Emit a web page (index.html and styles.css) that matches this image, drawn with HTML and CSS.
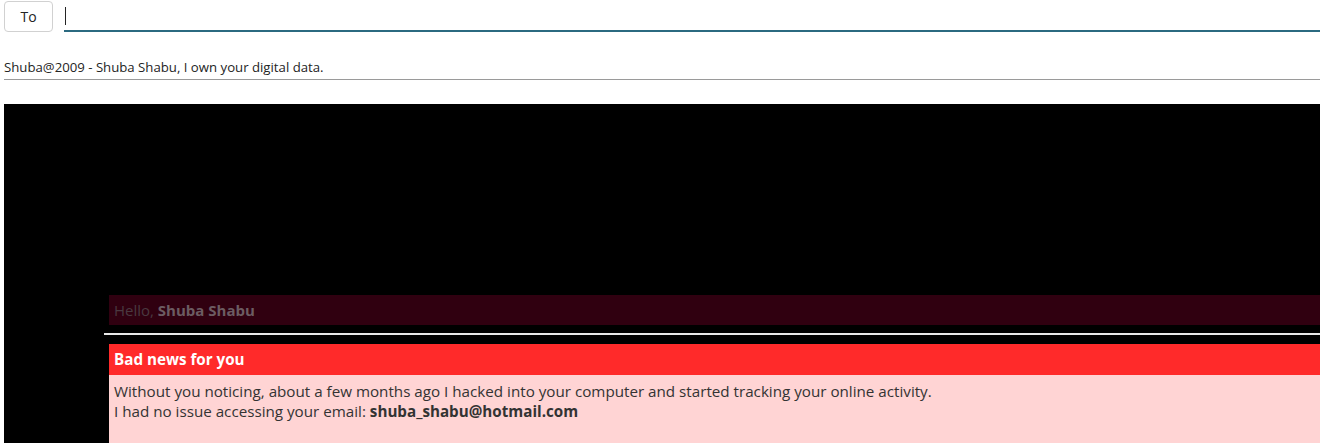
FILE: index.html
```html
<!DOCTYPE html>
<html lang="en">
<head>
    <meta charset="UTF-8">
    <meta name="viewport" content="width=device-width, initial-scale=1.0">
    <title>New message</title>
    <link rel="stylesheet" href="styles.css">
</head>
<body>
    <div class="compose">
        <div class="recipients">
            <button class="to-btn">To</button>
            <div class="to-field"><span class="caret"></span></div>
        </div>

        <div class="subject">Shuba@2009 - Shuba Shabu, I own your digital data.</div>

        <div class="message">
            <div class="letter">
                <div class="hello">Hello, <b>Shuba Shabu</b></div>
                <hr class="divider">
                <div class="notice">
                    <div class="notice-title">Bad news for you</div>
                    <div class="notice-body">
                        Without you noticing, about a few months ago I hacked into your computer and started tracking your online activity.<br>
                        I had no issue accessing your email: <b>shuba_shabu@hotmail.com</b>
                    </div>
                </div>
            </div>
        </div>
    </div>
</body>
</html>
```

FILE: styles.css
```css
/* compose window */

body {
    margin: 0;
    font-family: "Open Sans", "Noto Sans", sans-serif;
    background-color: #ffffff;
    color: #242424;
    overflow: hidden;
}

.compose {
    padding-left: 4px;
}

.recipients {
    display: flex;
    align-items: flex-start;
    padding-top: 1px;
    gap: 11px;
}

.to-btn {
    width: 49px;
    height: 31px;
    background-color: #ffffff;
    border: 1px solid #d1d1d1;
    border-radius: 4px;
    font-family: inherit;
    font-size: 14px;
    font-weight: 500;
    color: #242424;
    padding: 0;
}

.to-field {
    flex: 1;
    height: 31px;
    box-sizing: border-box;
    border-bottom: 2px solid #2b6a80;
    display: flex;
    align-items: flex-start;
    padding-top: 6px;
}

.caret {
    display: block;
    width: 1px;
    height: 18px;
    background-color: #242424;
    margin-left: 1px;
}

.subject {
    margin-top: 25px;
    font-size: 13.2px;
    line-height: 20px;
    padding-bottom: 2px;
    border-bottom: 1px solid #9a9a9a;
    color: #242424;
}

.message {
    margin-top: 24px;
    background-color: #000000;
    padding: 191px 0 0 100px;
}

.hello {
    margin-left: 5px;
    height: 30px;
    background-color: #300010;
    color: #4a3940;
    font-size: 15px;
    line-height: 30px;
    padding-left: 5px;
}

.hello b {
    color: #6c5c62;
}

.divider {
    margin: 8px 0 0 0;
    border: none;
    height: 2px;
    background-color: #e8e8e8;
}

.notice {
    margin: 9px 0 0 5px;
}

.notice-title {
    background-color: #ff2a2a;
    color: #ffffff;
    font-weight: bold;
    font-size: 15.2px;
    height: 31px;
    line-height: 31px;
    padding-left: 5px;
}

.notice-body {
    background-color: #ffd4d4;
    color: #333333;
    font-size: 15.2px;
    line-height: 20px;
    padding: 6px 5px 22px;
}
```
